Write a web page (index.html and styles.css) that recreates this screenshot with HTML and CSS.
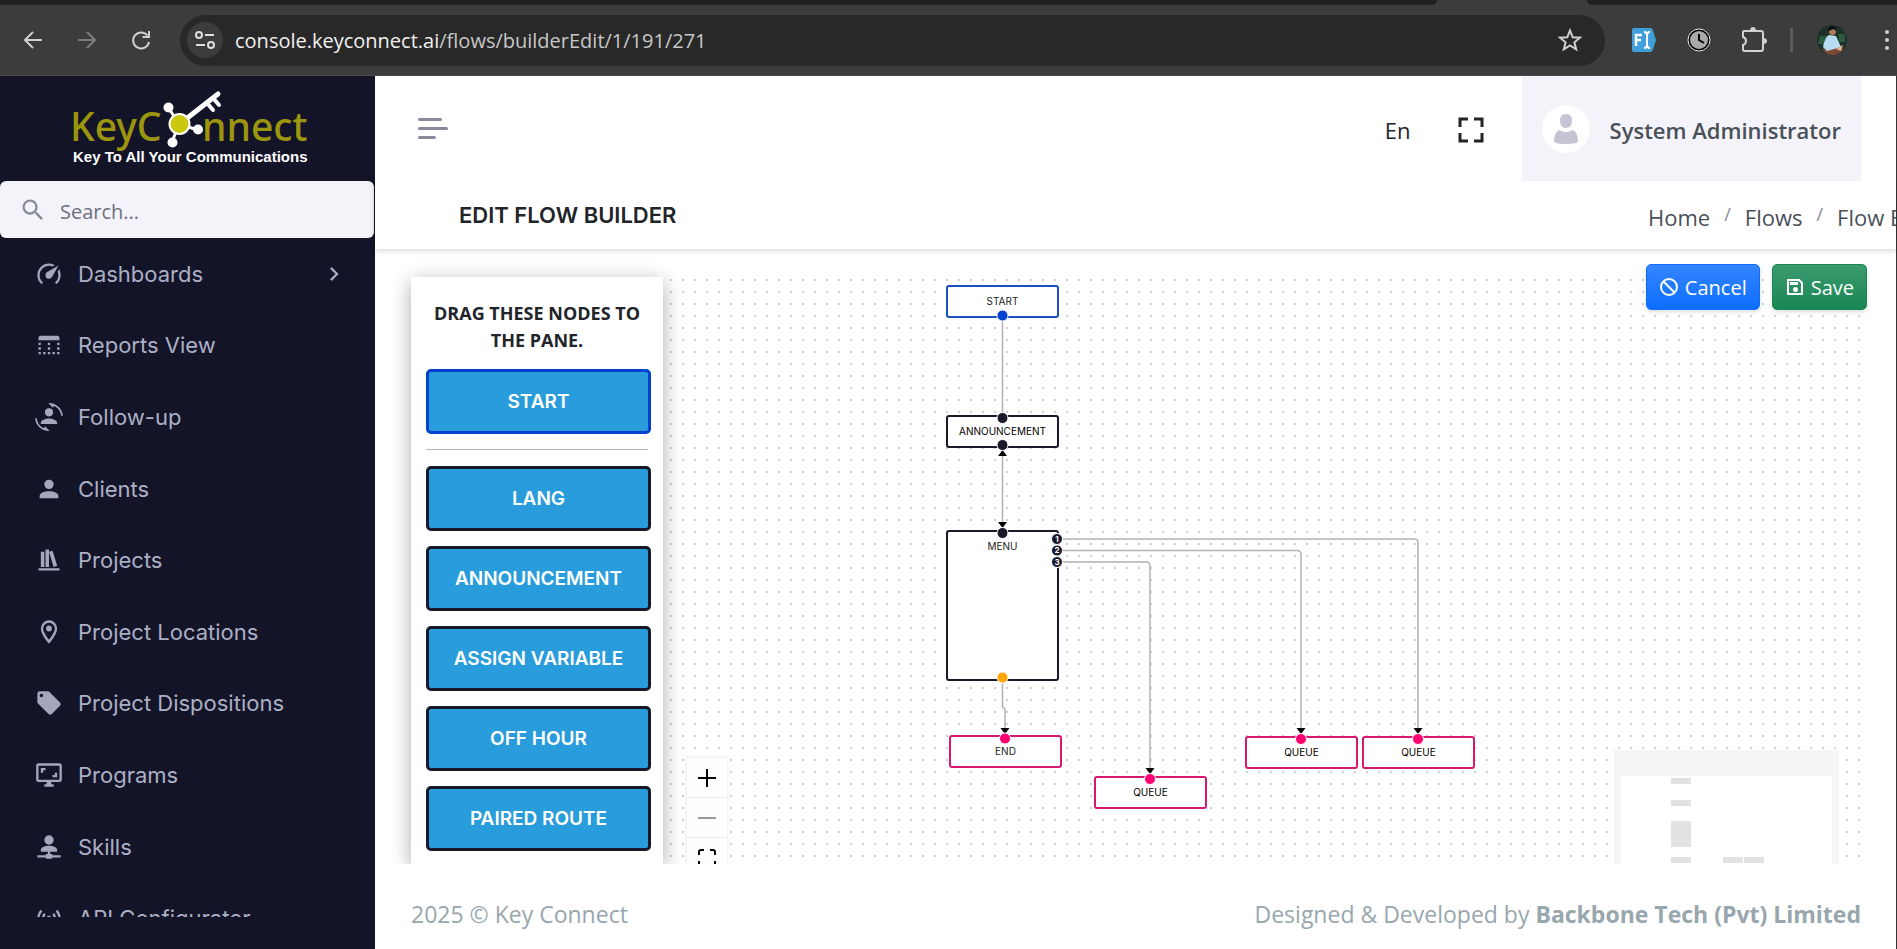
FILE: index.html
```html
<!DOCTYPE html>
<html lang="en">
<head>
<meta charset="utf-8">
<title>Edit Flow Builder</title>
<link rel="stylesheet" href="styles.css">
</head>
<body>
<header class="browser">
  <div class="tabstrip"><span class="tab-left"></span><span class="tab-right"></span></div>
  <div class="toolbar">
    <div class="nav-buttons">
      <button class="chrome-btn" aria-label="Back"><svg width="24" height="24" viewBox="0 0 24 24" fill="none" stroke="#d0d0d0" stroke-width="2"><path d="M21 12H4M12 4L4 12L12 20"/></svg></button>
      <button class="chrome-btn" aria-label="Forward"><svg width="24" height="24" viewBox="0 0 24 24" fill="none" stroke="#7c7c7c" stroke-width="2"><path d="M3 12H20M12 4L20 12L12 20"/></svg></button>
      <button class="chrome-btn" aria-label="Reload"><svg width="24" height="24" viewBox="0 0 24 24" fill="none" stroke="#d0d0d0" stroke-width="2"><path d="M20 14A8 8 0 1 1 18.500 7.500M20 3V9H13.500"/></svg></button>
    </div>
    <div class="omnibox">
      <span class="site-info"><svg width="24" height="24" viewBox="0 0 24 24" fill="none" stroke="#dedede" stroke-width="2"><circle cx="6" cy="7" r="3"/><path d="M12 7H21M3 17H12"/><circle cx="18" cy="17" r="3"/></svg></span>
      <div class="url"><span class="host">console.keyconnect.ai</span>/flows/builderEdit/1/191/271</div>
      <button class="chrome-btn star" aria-label="Bookmark"><svg width="26" height="26" viewBox="0 0 26 26" fill="none" stroke="#d0d0d0" stroke-width="2"><path d="M13 3.500L15.700 10.200L23 10.700L17.400 15.300L19.200 22.300L13 18.400L6.800 22.300L8.600 15.300L3 10.700L10.300 10.200Z"/></svg></button>
    </div>
    <div class="extensions">
      <button class="chrome-btn" aria-label="Font extension"><svg width="26" height="26" viewBox="0 0 26 26"><path d="M3 1H19Q21 1 21.800 3L25 13L21.800 23Q21 25 19 25H3Q1 25 1 23V3Q1 1 3 1Z" fill="#419fdc"/><path d="M5 19V8H11M5 13H10" fill="none" stroke="#fff" stroke-width="2.500"/><path d="M13 5Q16 5 16 8V18Q16 21 13 21M19 5Q16 5 16 8M19 21Q16 21 16 18" fill="none" stroke="#fff" stroke-width="2"/></svg></button>
      <button class="chrome-btn" aria-label="Clock extension"><svg width="26" height="26" viewBox="0 0 26 26"><circle cx="13" cy="13" r="11" fill="#000" stroke="#e8e8e8"/><circle cx="13" cy="13" r="9" fill="#a9a9a9"/><path d="M13 7V13L18 16" fill="none" stroke="#000" stroke-width="2"/></svg></button>
      <button class="chrome-btn" aria-label="Extensions"><svg width="26" height="26" viewBox="0 0 26 26"><path d="M3 4H20Q22 4 22 6V22Q22 24 20 24H3Q2 24 2 22V18Q5 17 5 14Q5 11 2 10V5Q2 4 3 4Z" fill="none" stroke="#d0d0d0" stroke-width="2"/><path d="M9 4Q9 0 12 0Q15 0 15 4ZM22 11Q26 11 26 14Q26 17 22 17Z" fill="#d0d0d0"/></svg></button>
      <span class="divider"></span>
      <button class="chrome-btn" aria-label="Profile"><svg width="30" height="30" viewBox="0 0 30 30"><circle cx="15" cy="15" r="15" fill="#1c3128"/><path d="M3 11H12V19H1Z M21 9H28V17H22Z" fill="#2b5a40"/><path d="M5 24Q15 21 27 24Q21 30 15 30Q9 30 5 24Z" fill="#7a4a35"/><path d="M12 10Q8 12 6 22L10 26L24 22L19 11Z" fill="#badcf0"/><path d="M19 24L26 20L24 26Z" fill="#e0b193"/><circle cx="15.500" cy="6.500" r="3.500" fill="#ac7b5d"/><path d="M11 6Q11 1 16 1Q20 2 19 6L17 4Z" fill="#0b0b0b"/></svg></button>
      <button class="chrome-btn dots" aria-label="Menu"><svg width="6" height="26" viewBox="0 0 6 26" fill="#d0d0d0"><circle cx="3" cy="5" r="2"/><circle cx="3" cy="13" r="2"/><circle cx="3" cy="21" r="2"/></svg></button>
    </div>
  </div>
</header>
<div class="app">
  <aside class="sidebar">
    <a class="logo" href="#" aria-label="Key Connect home">
      <svg width="250" height="86" viewBox="62 86 250 86">
        <g class="logo-name"><text x="70" y="141">KeyC</text><text x="202" y="141">nnect</text></g>
        <text class="logo-tag" x="73" y="162">Key To All Your Communications</text>
        <g stroke="#fff" fill="none" stroke-linecap="round"><path d="M168 107L179 124L172 142M179 124L198 130" stroke-width="3"/><path d="M186 119L218 94" stroke-width="5"/><path d="M207 103L213 110M213 98L219 105" stroke-width="4"/></g>
        <g fill="#fff"><circle cx="168.500" cy="107.500" r="5"/><circle cx="198" cy="129.500" r="5"/><circle cx="172.500" cy="142.500" r="5"/></g>
        <circle cx="179.500" cy="124" r="10" fill="#cbc90f" stroke="#fff" stroke-width="2"/>
      </svg>
    </a>
    <label class="search">
      <svg class="search-icon" viewBox="0 0 24 24"><path d="M9.500,3A6.500,6.500 0 0,1 16,9.500C16,11.110 15.410,12.590 14.440,13.730L14.710,14H15.500L20.500,19L19,20.500L14,15.500V14.710L13.730,14.440C12.590,15.410 11.110,16 9.500,16A6.500,6.500 0 0,1 3,9.500A6.500,6.500 0 0,1 9.500,3M9.500,5C7,5 5,7 5,9.500C5,12 7,14 9.500,14C12,14 14,12 14,9.500C14,7 12,5 9.500,5Z"/></svg>
      <input type="text" placeholder="Search..." aria-label="Search">
    </label>
    <nav class="menu-wrap">
      <ul class="menu">
        <li><a href="#"><svg viewBox="0 0 24 24"><path d="M12,16A3,3 0 0,1 9,13C9,11.880 9.610,10.900 10.500,10.390L20.210,4.770L14.680,14.350C14.180,15.330 13.170,16 12,16M12,3C13.810,3 15.500,3.500 16.970,4.320L14.870,5.530C14,5.190 13,5 12,5A8,8 0 0,0 4,13C4,15.210 4.890,17.210 6.340,18.650H6.350C6.740,19.040 6.740,19.670 6.350,20.060C5.960,20.450 5.320,20.450 4.930,20.070V20.070C3.120,18.260 2,15.760 2,13A10,10 0 0,1 12,3M22,13C22,15.760 20.880,18.260 19.070,20.070V20.070C18.680,20.450 18.050,20.450 17.660,20.060C17.270,19.670 17.270,19.040 17.660,18.650V18.650C19.110,17.200 20,15.210 20,13C20,12 19.810,11 19.460,10.100L20.670,8C21.500,9.500 22,11.180 22,13Z"/></svg><span>Dashboards</span><svg class="chevron" viewBox="0 0 24 24"><path d="M8.590,16.580L13.170,12L8.590,7.410L10,6L16,12L10,18L8.590,16.580Z"/></svg></a></li>
        <li><a href="#"><svg viewBox="0 0 24 24"><path d="M5 4H19Q21 4 21 6V8H3V6Q3 4 5 4ZM3 10H5V12H3ZM11 10H13V12H11ZM19 10H21V12H19ZM3 14H5V16H3ZM11 14H13V16H11ZM19 14H21V16H19ZM3 18H5V20H3ZM7 18H9V20H7ZM11 18H13V20H11ZM15 18H17V20H15ZM19 18H21V20H19Z"/></svg><span>Reports View</span></a></li>
        <li><a href="#"><svg viewBox="0 0 24 24"><path d="M7.500,21.500L8.850,20.160L12.660,23.970L12,24C5.710,24 0.560,19.160 0.050,13H1.550C1.910,16.760 4.250,19.940 7.500,21.500M16.500,2.500L15.150,3.840L11.340,0.030L12,0C18.290,0 23.440,4.840 23.950,11H22.450C22.090,7.240 19.750,4.070 16.500,2.500M5,17C5,14.600 9,13.200 12,13.200C15,13.200 19,14.600 19,17V18H5V17M15.500,8A3.500,3.500 0 0,1 12,11.500A3.500,3.500 0 0,1 8.500,8A3.500,3.500 0 0,1 12,4.500A3.500,3.500 0 0,1 15.500,8Z"/></svg><span>Follow-up</span></a></li>
        <li><a href="#"><svg viewBox="0 0 24 24"><path d="M12,4A4,4 0 0,1 16,8A4,4 0 0,1 12,12A4,4 0 0,1 8,8A4,4 0 0,1 12,4M12,14C16.420,14 20,15.790 20,18V20H4V18C4,15.790 7.580,14 12,14Z"/></svg><span>Clients</span></a></li>
        <li><a href="#"><svg viewBox="0 0 24 24"><path d="M9 3V18H12V3H9M12 5L16 18L19 17L15 4L12 5M5 5V18H8V5H5M3 19V21H21V19H3Z"/></svg><span>Projects</span></a></li>
        <li><a href="#"><svg viewBox="0 0 24 24"><path d="M12,6.500A2.500,2.500 0 0,1 14.500,9A2.500,2.500 0 0,1 12,11.500A2.500,2.500 0 0,1 9.500,9A2.500,2.500 0 0,1 12,6.500M12,2A7,7 0 0,1 19,9C19,14.250 12,22 12,22C12,22 5,14.250 5,9A7,7 0 0,1 12,2M12,4A5,5 0 0,0 7,9C7,10 7,12 12,18.710C17,12 17,10 17,9A5,5 0 0,0 12,4Z"/></svg><span>Project Locations</span></a></li>
        <li><a href="#"><svg viewBox="0 0 24 24"><path d="M5.500,7A1.500,1.500 0 0,1 4,5.500A1.500,1.500 0 0,1 5.500,4A1.500,1.500 0 0,1 7,5.500A1.500,1.500 0 0,1 5.500,7M21.410,11.580L12.410,2.580C12.050,2.220 11.550,2 11,2H4C2.890,2 2,2.890 2,4V11C2,11.550 2.220,12.050 2.590,12.410L11.580,21.410C11.950,21.770 12.450,22 13,22C13.550,22 14.050,21.770 14.410,21.410L21.410,14.410C21.780,14.050 22,13.550 22,13C22,12.440 21.770,11.940 21.410,11.580Z"/></svg><span>Project Dispositions</span></a></li>
        <li><a href="#"><svg viewBox="0 0 24 24"><path d="M9,6H5V10H7V8H9V6M19,10H17V12H15V14H19V10M21,16H3V4H21M21,2H3C1.890,2 1,2.890 1,4V16A2,2 0 0,0 3,18H10V20H8V22H16V20H14V18H21A2,2 0 0,0 23,16V4C23,2.890 22.100,2 21,2"/></svg><span>Programs</span></a></li>
        <li><a href="#"><svg viewBox="0 0 24 24"><path d="M13,16V18H14A1,1 0 0,1 15,19H22V21H15A1,1 0 0,1 14,22H10A1,1 0 0,1 9,21H2V19H9A1,1 0 0,1 10,18H11V16H5V14.500C5,12.570 8.130,11 12,11C15.870,11 19,12.570 19,14.500V16H13M12,2A4,4 0 0,1 16,6A4,4 0 0,1 12,10A4,4 0 0,1 8,6A4,4 0 0,1 12,2Z"/></svg><span>Skills</span></a></li>
        <li><a href="#"><svg viewBox="0 0 24 24"><path d="M4.930,4.930C3.120,6.740 2,9.240 2,12C2,14.760 3.120,17.260 4.930,19.070L6.340,17.660C4.890,16.220 4,14.220 4,12C4,9.790 4.890,7.780 6.340,6.340L4.930,4.930M19.070,4.930L17.660,6.340C19.110,7.790 20,9.790 20,12C20,14.220 19.110,16.220 17.660,17.660L19.070,19.070C20.880,17.260 22,14.760 22,12C22,9.240 20.880,6.740 19.070,4.930M7.760,7.760C6.670,8.850 6,10.350 6,12C6,13.650 6.670,15.150 7.760,16.240L9.170,14.830C8.450,14.110 8,13.110 8,12C8,10.890 8.450,9.890 9.170,9.170L7.760,7.760M16.240,7.760L14.830,9.170C15.550,9.890 16,10.890 16,12C16,13.110 15.550,14.110 14.830,14.830L16.240,16.240C17.330,15.150 18,13.650 18,12C18,10.350 17.330,8.850 16.240,7.760M12,10A2,2 0 0,0 10,12A2,2 0 0,0 12,14A2,2 0 0,0 14,12A2,2 0 0,0 12,10Z"/></svg><span>API Configurator</span></a></li>
      </ul>
    </nav>
  </aside>
  <main class="main">
    <header class="topbar">
      <button class="burger" aria-label="Toggle menu"><span></span><span></span><span></span></button>
      <div class="topbar-right">
        <button class="lang">En</button>
        <button class="fullscreen" aria-label="Full screen"><svg width="26" height="26" viewBox="0 0 26 26" fill="none" stroke="#212529" stroke-width="3"><path d="M2 10V2H10M16 2H24V10M24 16V24H16M10 24H2V16"/></svg></button>
        <button class="user"><svg width="48" height="48" viewBox="0 0 48 48"><circle cx="24" cy="24" r="24" fill="#fff"/><path d="M24 9Q30 9 30 15.500Q30 23 24 23Q18 23 18 15.500Q18 9 24 9ZM17 25Q24 29 31 25Q36 28 36 36Q36 39 24 39Q12 39 12 36Q12 28 17 25Z" fill="#c5c4d4"/></svg><span>System Administrator</span></button>
      </div>
    </header>
    <div class="titlebar">
      <h1>EDIT FLOW BUILDER</h1>
      <nav class="crumbs"><a href="#">Home</a><i>/</i><a href="#">Flows</a><i>/</i><a href="#">Flow Builder</a></nav>
    </div>
    <section class="content">
      <div class="palette">
        <h2>DRAG THESE NODES TO THE PANE.</h2>
        <button class="drag start">START</button>
        <hr>
        <button class="drag">LANG</button>
        <button class="drag">ANNOUNCEMENT</button>
        <button class="drag">ASSIGN VARIABLE</button>
        <button class="drag">OFF HOUR</button>
        <button class="drag">PAIRED ROUTE</button>
      </div>
      <div class="canvas">
        <div class="node n-start">START</div>
        <div class="node n-ann">ANNOUNCEMENT</div>
        <div class="node n-menu">MENU</div>
        <div class="node pink n-end">END</div>
        <div class="node pink n-q1">QUEUE</div>
        <div class="node pink n-q2">QUEUE</div>
        <div class="node pink n-q3">QUEUE</div>
        <svg class="edges" viewBox="0 0 1198 586" width="1198" height="586">
          <g fill="none" stroke="#b1b1b7" stroke-width="1.500">
            <path d="M339.500 42V138M339.500 172V252"/>
            <path d="M339.500 404V430Q339.500 431 341 431Q342 431 342 433V458"/>
            <path d="M399 262H751Q755 262 755 266V458"/>
            <path d="M399 273.500H634Q638 273.500 638 277.500V458"/>
            <path d="M399 285H483Q487 285 487 289V498"/>
          </g>
          <g fill="#000"><path d="M335 179H344L339.500 173ZM335 245H344L339.500 251ZM337.500 451H346.500L342 457ZM482.500 491H491.500L487 497ZM633.500 451H642.500L638 457ZM750.500 451H759.500L755 457Z"/></g>
          <g stroke="#fff" stroke-width="1">
            <circle cx="339.500" cy="38.500" r="5.500" fill="#0041d0"/>
            <g fill="#1a192b"><circle cx="339.500" cy="141" r="5.500"/><circle cx="339.500" cy="168" r="5.500"/><circle cx="339.500" cy="256" r="5.500"/><circle cx="394" cy="262" r="5.500"/><circle cx="394" cy="273.500" r="5.500"/><circle cx="394" cy="285" r="5.500"/></g>
            <circle cx="339.500" cy="400.500" r="5.500" fill="#ffa500"/>
            <g fill="#ff0072"><circle cx="342" cy="461.500" r="5.500"/><circle cx="487" cy="502" r="5.500"/><circle cx="638" cy="462" r="5.500"/><circle cx="755" cy="462" r="5.500"/></g>
          </g>
          <g class="port-num"><text x="394" y="265">1</text><text x="394" y="276">2</text><text x="394" y="288">3</text></g>
        </svg>
        <div class="controls">
          <button aria-label="Zoom in"><svg width="18" height="18" viewBox="0 0 18 18" stroke="#000" stroke-width="2"><path d="M0 9H18M9 0V18"/></svg></button>
          <button aria-label="Zoom out" disabled><svg width="18" height="18" viewBox="0 0 18 18" stroke="#999" stroke-width="2"><path d="M0 9H18"/></svg></button>
          <button aria-label="Fit view"><svg width="18" height="18" viewBox="0 0 18 18" fill="none" stroke="#000" stroke-width="2"><path d="M1 6V3Q1 1 3 1H6M12 1H15Q17 1 17 3V6M17 12V15Q17 17 15 17H12M6 17H3Q1 17 1 15V12"/></svg></button>
        </div>
        <svg class="minimap" width="225" height="150" viewBox="0 0 225 150"><path d="M0 0H225V150H0Z" fill="#f5f5f5"/><path d="M7 26H218V124H7Z" fill="#fff"/><g fill="#e2e2e2"><path d="M57 28H77V34H57ZM57 50H77V56H57ZM57 71H77V97H57ZM57 107H77V113H57ZM109 107H129V113H109ZM130 107H150V113H130Z"/></g></svg>
      </div>
      <div class="actions">
        <button class="btn cancel"><svg width="20" height="20" viewBox="0 0 20 20" fill="none" stroke="#fff" stroke-width="2"><circle cx="10" cy="10" r="8"/><path d="M4.500 4.500L15.500 15.500"/></svg>Cancel</button>
        <button class="btn save"><svg width="20" height="20" viewBox="0 0 20 20" fill="none" stroke="#fff" stroke-width="2"><path d="M3 3H14L17 6V17H3Z"/><path d="M5 6.500H13" stroke-width="3"/><circle cx="10.500" cy="12.500" r="2.500" fill="#fff" stroke="none"/></svg>Save</button>
      </div>
    </section>
    <footer class="footer"><span>2025 © Key Connect</span><span>Designed &amp; Developed by <b>Backbone Tech (Pvt) Limited</b></span></footer>
  </main>
</div>
</body>
</html>
```
FILE: styles.css
```css
* { box-sizing: border-box; }
body { margin: 0; height: 100vh; display: flex; flex-direction: column; overflow: hidden; background: #fff; font-family: "Open Sans", "Noto Sans", sans-serif; color: #212529; }
button { border: 0; background: none; padding: 0; margin: 0; font: inherit; color: inherit; }
a { color: inherit; text-decoration: none; }
svg { display: block; flex: none; }

.browser { flex: 0 0 76px; display: flex; flex-direction: column; background: #3c3c3c; border-bottom: 1px solid #4a4848; }
.tabstrip { height: 5px; display: flex; justify-content: space-between; }
.tab-left { flex: 1; background: #1f2121; border-radius: 0 0 8px 0; }
.tab-right { flex: 0 0 310px; margin-left: 150px; background: #1f2121; border-radius: 0 0 0 8px; }
.toolbar { flex: 1; display: flex; align-items: center; padding: 0 7px 0 21px; }
.nav-buttons { display: flex; gap: 30px; width: 159px; }
.omnibox { flex: 1; height: 51px; display: flex; align-items: center; gap: 12px; padding: 0 22px 0 7px; border-radius: 26px; background: #282828; }
.site-info { width: 36px; height: 36px; display: grid; place-items: center; border-radius: 50%; background: #3c3c3c; }
.url { flex: 1; font-size: 20px; color: #c7c7c7; }
.host { color: #f0f0f0; }
.extensions { display: flex; align-items: center; gap: 29px; margin-left: 26px; }
.divider { width: 3px; height: 24px; background: #5a5a5a; margin: 0 -5px 0 -6px; }
.dots { margin-left: 8px; }

.app { flex: 1; min-height: 0; display: flex; }
.sidebar { flex: 0 0 375px; display: flex; flex-direction: column; background: #141428; padding-bottom: 32px; }
.logo { flex: 0 0 105px; padding: 10px 0 0 62px; }
.logo-name { font: 500 39px "Noto Sans", sans-serif; fill: #9c960f; }
.logo-tag { font: bold 15px "Liberation Sans", sans-serif; fill: #fff; }
.search { flex: 0 0 57px; margin-right: 1px; display: flex; align-items: center; padding-left: 19px; gap: 11px; background: #f3f3f9; border-radius: 6px; }
.search-icon { width: 28px; height: 28px; fill: #878a99; }
.search input { flex: 1; min-width: 0; border: 0; outline: 0; background: none; padding: 3px 0 0 2px; font: 20px "Open Sans", sans-serif; }
.search input::placeholder { color: #6c6f7c; }
.menu-wrap { flex: 1; min-height: 0; overflow: hidden; }
.menu { list-style: none; margin: 0; padding: 0; height: 716px; display: grid; grid-template-rows: repeat(10, 1fr); font: 22px "Inter", sans-serif; color: #abb0c4; }
.menu a { height: 100%; display: flex; align-items: center; gap: 15px; padding: 0 27px 0 35px; }
.menu svg { width: 28px; height: 28px; fill: #a5a6bd; }
.menu span { flex: 1; }

.main { flex: 1; min-width: 0; display: flex; flex-direction: column; border-right: 1px solid #333; }
.topbar { flex: 0 0 105px; display: flex; justify-content: space-between; padding: 0 35px 0 43px; position: relative; z-index: 2; background: #fff; }
.burger { display: flex; flex-direction: column; justify-content: center; align-items: flex-start; gap: 6px; width: 30px; }
.burger span { width: 24px; height: 3px; border-radius: 2px; background: #878a99; }
.burger span:nth-child(2) { width: 30px; }
.burger span:nth-child(3) { width: 18px; }
.topbar-right { display: flex; align-items: center; }
.lang { font-size: 22px; margin-right: 47px; padding-top: 2px; }
.fullscreen { margin-right: 38px; padding-top: 2px; }
.user { align-self: stretch; display: flex; align-items: center; gap: 20px; padding: 0 20px; background: #f3f3f9; font-size: 22px; font-weight: 600; color: #495057; }
.user span { padding-top: 2px; }
.titlebar { flex: 0 0 68px; display: flex; align-items: center; justify-content: space-between; padding-left: 84px; box-shadow: 0 1px 6px #0003; z-index: 1; background: #fff; }
h1 { margin: 0; font: 600 22px "Inter", sans-serif; }
.crumbs { flex: 0 0 248px; display: flex; gap: 14px; padding-top: 4px; overflow: hidden; white-space: nowrap; font-size: 22px; color: #495057; }
.crumbs i { font: 18px "Open Sans", sans-serif; color: #878a99; }

.content { flex: 1; min-height: 0; position: relative; overflow: hidden; display: flex; padding: 28px 35px 0 36px; }
.palette { flex: 0 0 252px; min-width: 0; padding: 23px 15px 0; box-shadow: 0 5px 20px #0005; background: #fff; z-index: 1; }
h2 { margin: 0 0 15px; font: bold 18px/27px "Open Sans", sans-serif; text-align: center; color: #212529; }
.drag { display: block; width: 225px; height: 65px; margin-bottom: 15px; border: 3px solid #1a192b; border-radius: 5px; background: #299cdb; color: #fff; font: 600 19px "Inter", sans-serif; }
.drag.start { border-color: #0041d0; }
hr { margin: 0 0 16px; border: 0; border-top: 1px solid #b4b7be; }
.canvas { flex: 1; position: relative; overflow: hidden; background: radial-gradient(circle, #cfcfd2 1px, transparent 1px) 2px -3px / 12px 12px; }
.node { position: absolute; width: 113px; height: 33px; border: 2px solid #1a192b; border-radius: 3px; background: #fff; font: 10px/29px "Inter", sans-serif; text-align: center; color: #222; }
.pink { border-color: #d6196f; }
.n-start { left: 283px; top: 8px; border-color: #1c4fc0; }
.n-ann { left: 283px; top: 138px; color: #000; }
.n-menu { left: 283px; top: 253px; height: 151px; }
.n-end { left: 286px; top: 458px; }
.n-q1 { left: 431px; top: 499px; color: #000; }
.n-q2 { left: 582px; top: 459px; color: #000; }
.n-q3 { left: 699px; top: 459px; color: #000; }
.edges { position: absolute; left: 0; top: 0; }
.port-num { font: bold 8px "Inter", sans-serif; fill: #fff; text-anchor: middle; }
.controls { position: absolute; left: 24px; top: 481px; width: 40px; display: flex; flex-direction: column; box-shadow: 0 0 2px 1px #00000014; }
.controls button { height: 40px; display: grid; place-items: center; background: #fefefe; border-bottom: 1px solid #eee; }
.minimap { position: absolute; right: 22px; top: 473px; }
.actions { position: absolute; z-index: 2; top: 15px; right: 29px; display: flex; gap: 12px; }
.btn { height: 46px; display: flex; align-items: center; gap: 6px; padding: 0 12px; border-radius: 5px; color: #fff; font-size: 20px; box-shadow: 0 2px 4px #0002; }
.cancel { background: linear-gradient(#3585ff, #0d6efd); border: 1px solid #0d6efd; }
.save { background: linear-gradient(#3c996e, #198754); border: 1px solid #198754; }
.footer { flex: 0 0 85px; display: flex; justify-content: space-between; align-items: center; padding: 14px 35px 0 36px; font-size: 23px; color: #98a6ad; white-space: nowrap; }
```
